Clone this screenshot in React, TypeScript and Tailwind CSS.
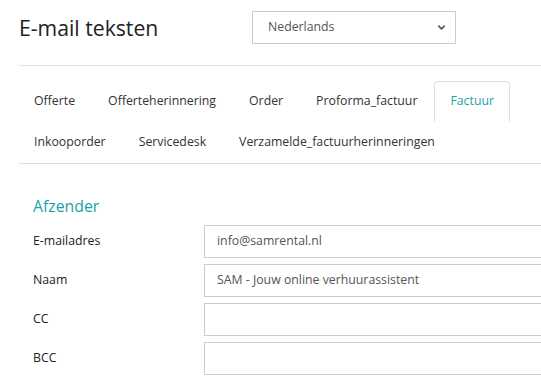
import { ChevronDown } from "lucide-react";

const rowOne = ["Offerte", "Offerteherinnering", "Order", "Proforma_factuur", "Factuur"];
const rowTwo = ["Inkooporder", "Servicedesk", "Verzamelde_factuurherinneringen"];

const Tab = ({ label, active }: { label: string; active?: boolean }) => (
    <div
        className={
            "h-[41px] px-[15px] mr-px flex items-center rounded-t border " +
            (active ? "border-[#dddddd] border-b-white text-[#1ba3a8] bg-white" : "border-transparent text-[#333333]")
        }
    >
        {label}
    </div>
);

const fields = [
    { label: "E-mailadres", value: "info@samrental.nl" },
    { label: "Naam", value: "SAM - Jouw online verhuurassistent" },
    { label: "CC", value: "" },
    { label: "BCC", value: "" },
];

const App = () => {
    return (
        <div
            className="w-[541px] h-[383px] overflow-hidden bg-white"
            style={{ fontFamily: '"Open Sans", "Noto Sans", sans-serif' }}
        >
            <div className="w-[600px] pl-[19px]">
                <div className="flex items-center pt-[11px] pb-[21px] border-b border-[#e3e3e3]">
                    <h1 className="w-[233px] text-[21.2px] leading-none text-[#222222]">E-mail teksten</h1>
                    <div className="w-[204px] h-[33px] border border-[#cccccc] flex items-center justify-between pl-[15px] pr-[8px] text-[12.3px] text-[#555555]">
                        <span>Nederlands</span>
                        <ChevronDown size={11} strokeWidth={3.5} className="text-[#555555]" />
                    </div>
                </div>

                <div className="mt-[15px] border-b border-[#dddddd] text-[12.3px]">
                    <div className="flex -ml-px">
                        {rowOne.map((t) => (
                            <Tab key={t} label={t} active={t === "Factuur"} />
                        ))}
                    </div>
                    <div className="flex -ml-px">
                        {rowTwo.map((t) => (
                            <Tab key={t} label={t} />
                        ))}
                    </div>
                </div>

                <div className="pl-[14px] pt-[35px]">
                    <h2 className="text-[15.8px] leading-none text-[#1ba3a8] mb-[10px]">Afzender</h2>
                    <div className="flex flex-col gap-[6px] text-[12.3px]">
                        {fields.map((f) => (
                            <div key={f.label} className="flex items-center">
                                <label className="w-[171px] text-[#222222]">{f.label}</label>
                                <div className="flex-1 h-[33px] border border-[#cccccc] flex items-center px-[12px] text-[#555555]">
                                    {f.value}
                                </div>
                            </div>
                        ))}
                    </div>
                </div>
            </div>
        </div>
    );
};

export default App;
